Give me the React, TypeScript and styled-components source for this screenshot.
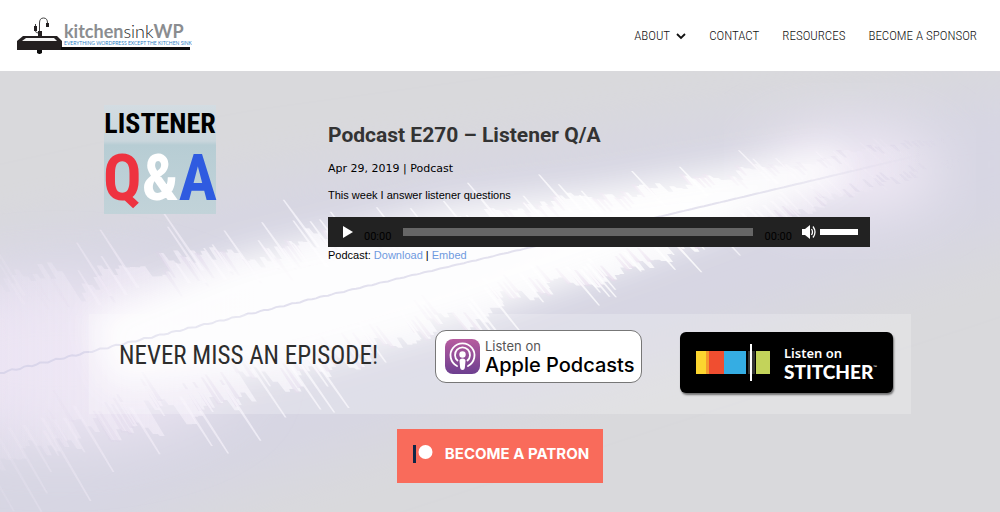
import React from "react";
import styled, { createGlobalStyle } from "styled-components";

const display = `Roboto, "Liberation Sans", sans-serif`;
const narrow = `"Roboto Condensed", Roboto, "Liberation Sans", sans-serif`;
const body = `"Liberation Sans", Arial, sans-serif`;

const GlobalStyle = createGlobalStyle`
  * { box-sizing: border-box; }
  body { margin: 0; background: #d9dadd; color: #000; font: 11px/16px ${body}; }
  h1, h2, p { margin: 0; }
  a { text-decoration: none; }
  button { padding: 0; border: 0; background: none; cursor: pointer; }
`;

const Page = styled.div`
  display: flex;
  flex-direction: column;
  min-height: 100vh;
`;

const Header = styled.header`
  display: flex;
  align-items: center;
  justify-content: space-between;
  padding: 14px 23px 13px 16px;
  background: #fff;
`;

const HomeLink = styled.a`
  display: block;
  svg { display: block; }
`;

const Nav = styled.nav`
  display: flex;
  gap: 23px;
`;

const NavLink = styled.a`
  display: flex;
  align-items: center;
  gap: 6px;
  color: #111;
  font: 300 13px/22px ${narrow};
`;

const Hero = styled.main`
  position: relative;
  flex: 1;
  padding: 34px 24px 28px;
  overflow: hidden;
`;

const Backdrop = styled.svg`
  position: absolute;
  inset: 0;
  width: 100%;
  height: 100%;
`;

const Content = styled.div`
  position: relative;
  display: flex;
  flex-direction: column;
  align-items: center;
  max-width: 822px;
  margin: 0 auto;
`;

const Episode = styled.article`
  display: flex;
  align-items: flex-start;
  gap: 112px;
  width: 100%;
  padding: 0 41px 51px 15px;
`;

const Cover = styled.div`
  display: flex;
  flex-direction: column;
  align-items: center;
  flex: none;
  width: 112px;
  background: linear-gradient(#d3dce2 0, #c9d6dc 36px, #b7cdd4 40px, #c2d3d9 100%);
  font-family: ${narrow};
  font-weight: 700;
  white-space: nowrap;
`;

const CoverTop = styled.span`
  font-size: 28px;
  line-height: 38px;
`;

const CoverBottom = styled.span`
  font-size: 64px;
  line-height: 71px;
`;

const Tint = styled.span<{ $color: string }>`
  color: ${(p) => p.$color};
`;

const Details = styled.div`
  flex: 1;
  min-width: 0;
  padding-top: 15px;
`;

const Title = styled.h1`
  margin-bottom: 11px;
  color: #333;
  font: 700 21px/30px ${display};
`;

const Meta = styled.p`
  margin-bottom: 10px;
  font: 11px/16px "DejaVu Sans", Verdana, sans-serif;
`;

const Summary = styled.p`
  margin-bottom: 14px;
`;

const Player = styled.div`
  display: flex;
  align-items: center;
  height: 30px;
  padding: 0 12px 0 14px;
  background: #222;
  svg { display: block; }
`;

const Time = styled.span`
  padding: 10px 10px 0;
  color: #000;
  font: 11px/16px ${display};
`;

const Range = styled.input<{ $color: string; $thick: string }>`
  appearance: none;
  min-width: 0;
  height: ${(p) => p.$thick};
  margin: 0;
  background: ${(p) => p.$color};
  &::-webkit-slider-thumb { appearance: none; width: 0; height: 0; }
`;

const Seek = styled(Range)`
  flex: 1;
  margin: 0 2px;
`;

const Volume = styled(Range)`
  width: 38px;
  margin-left: 4px;
`;

const TextLink = styled.a`
  color: #6f9ade;
`;

const Subscribe = styled.section`
  display: flex;
  align-items: flex-start;
  width: 100%;
  min-height: 100px;
  padding: 16px 18px 16px 30px;
  margin-bottom: 15px;
  background: rgba(255, 255, 255, 0.22);
`;

const Slogan = styled.h2`
  flex: 1;
  padding-top: 10px;
  color: #2d2d2d;
  font: 400 25px/32px ${narrow};
`;

const AppleBadge = styled.a`
  display: flex;
  align-items: center;
  gap: 5px;
  width: 207px;
  height: 53px;
  margin-right: 38px;
  padding-left: 9px;
  border: 1px solid #777;
  border-radius: 11px;
  background: #fff;
  color: #000;
`;

const StitcherBadge = styled.a`
  display: flex;
  align-items: center;
  gap: 14px;
  width: 213px;
  height: 61px;
  margin-top: 2px;
  padding-left: 15px;
  border-radius: 6px;
  background: #000;
  box-shadow: 1px 2px 2px rgba(0, 0, 0, 0.5);
  color: #fff;
`;

const BadgeText = styled.span`
  display: flex;
  flex-direction: column;
  white-space: nowrap;
`;

const AppleSmall = styled.span`
  color: #555;
  font: 400 13px/16px Inter, sans-serif;
`;

const AppleName = styled.span`
  font: 500 20px/22px Inter, sans-serif;
`;

const StitcherSmall = styled.span`
  font: 600 13px/18px "Noto Sans", sans-serif;
`;

const StitcherName = styled.span`
  display: flex;
  align-items: flex-start;
  font: 900 19px/20px Lato, sans-serif;
`;

const Trademark = styled.span`
  font: 400 5px/10px Lato, sans-serif;
`;

const PatronLink = styled.a`
  display: flex;
  align-items: center;
  gap: 12px;
  height: 54px;
  padding: 0 14px 4px 16px;
  background: #f96b5b;
  color: #fff;
  font: 700 15px/20px Inter, sans-serif;
  white-space: nowrap;
`;

const Logo = () => (
  <svg width="176" height="44" viewBox="0 0 176 44" role="img" aria-label="kitchensinkWP">
    <path d="M23.500 18V9q0-5 4-5t4 5v3" fill="none" stroke="#444" strokeWidth="1" />
    <path d="M30 9h3v4h-3z" fill="#231f20" />
    <path d="M19.500 10v7q0 2 3 2" fill="none" stroke="#444" strokeWidth="1" />
    <path d="M22 17h4v5h-4zM18 12h3v5h-3z" fill="#231f20" />
    <path d="M7 22h34l5 5v9H1v-9z" fill="#231f20" />
    <path d="M10 24h28l3 3H6z" fill="#f4f4f4" />
    <path d="M45 33h129v3H45zM21 36h5v3l-2 1h-1l-2-1z" fill="#0c0c0c" />
    <text x="48" y="24" fontFamily="Lato, sans-serif" fontSize="18">
      <tspan fontWeight="700" fill="#8b8d90">kitchen</tspan>
      <tspan fontWeight="300" fill="#222">sink</tspan>
      <tspan fontWeight="700" fill="#8b8d90">WP</tspan>
    </text>
    <text x="48" y="31" fontFamily="Lato, sans-serif" fontSize="5" fontWeight="400" fill="#2f7fc4">
      EVERYTHING WORDPRESS EXCEPT THE KITCHEN SINK
    </text>
  </svg>
);

/* Repeatable pseudo-random numbers keep the wave form the same on each render. */
const noise = (i: number) => {
  const v = Math.sin(i * 127.1 + 3.7) * 43758.5453;
  return v - Math.floor(v);
};

const axisY = (x: number) => 302 - 0.237 * x;

const wave = (() => {
  const upper: string[] = [];
  const lower: string[] = [];
  let streaks = "";
  let shadows = "";
  for (let i = 0; i < 230; i++) {
    const x = -130 + i * 4.8;
    const size = Math.max(0.12, 1 - Math.max(0, x) / 1150);
    const slant = 0.5 + 0.24 * Math.min(1, Math.max(0, x / 900));
    const drop = Math.sqrt(1 - slant * slant);
    const group = Math.floor(i / 5);
    const up = (58 + 34 * noise(group + 11) + 24 * noise(i)) * size;
    const low = (66 + 34 * noise(group + 77) + 24 * noise(i + 500)) * size;
    const y = axisY(x);
    const at = (px: number, len: number) => `${(px + len * slant).toFixed(1)},${(y + len * drop).toFixed(1)}`;
    upper.push(at(x, -up), at(x + 4.8, -up));
    lower.push(at(x, low), at(x + 4.8, low));
    /* A tapered spike: wide where it leaves the body, narrow at its tip. */
    const spike = (from: number, to: number, w: number) =>
      `M${at(x - w / 2, to)}L${at(x - w, from)}L${at(x + w, from)}L${at(x + w / 2, to)}Z`;
    if (noise(i + 90) > 0.7) streaks += spike(-up + 24, -up - 62 * noise(i + 30) * size, 1.8);
    if (noise(i + 160) > 0.7) streaks += spike(low - 24, low + 78 * noise(i + 70) * size, 1.8);
    if (noise(i + 210) > 0.62) shadows += spike(-up - 2, -up + 36 * size, 2.4);
    if (noise(i + 260) > 0.62) shadows += spike(low + 2, low - 36 * size, 2.4);
  }
  return { shape: `M${upper.join("L")}L${lower.reverse().join("L")}Z`, streaks, shadows };
})();

const axis = Array.from({ length: 240 }, (_, i) => {
  const x = i * 4;
  const ripple = Math.sin(i * 1.7) * Math.max(0, 1 - x / 600);
  return `${x},${(axisY(x) + ripple).toFixed(1)}`;
}).join(" ");

const WaveBackdrop = () => (
  <Backdrop viewBox="0 0 1000 441" preserveAspectRatio="none" aria-hidden="true">
    <defs>
      <linearGradient id="fade" gradientUnits="userSpaceOnUse" x1="0" x2="1000" y1="0" y2="0">
        <stop offset="0" stopColor="#f0e9f6" stopOpacity="0.15" />
        <stop offset="0.12" stopColor="#f4eef9" stopOpacity="0.55" />
        <stop offset="0.3" stopColor="#fbf9ff" stopOpacity="0.7" />
        <stop offset="0.7" stopColor="#fff" stopOpacity="0.8" />
        <stop offset="0.82" stopColor="#f6f0fa" stopOpacity="0.4" />
        <stop offset="0.92" stopColor="#eee8f4" stopOpacity="0" />
      </linearGradient>
      <linearGradient id="shade" gradientUnits="userSpaceOnUse" x1="0" x2="1000" y1="0" y2="0">
        <stop offset="0.02" stopColor="#ddd4e8" stopOpacity="0" />
        <stop offset="0.2" stopColor="#ddd4e8" stopOpacity="0.6" />
        <stop offset="0.7" stopColor="#e1d0e6" stopOpacity="0.7" />
        <stop offset="0.9" stopColor="#d5d0e4" stopOpacity="0.3" />
        <stop offset="0.96" stopColor="#d5d0e4" stopOpacity="0" />
      </linearGradient>
      <linearGradient id="line" gradientUnits="userSpaceOnUse" x1="0" x2="1000" y1="0" y2="0">
        <stop offset="0" stopColor="#cdcbe4" />
        <stop offset="0.75" stopColor="#d4d1e4" />
        <stop offset="0.93" stopColor="#d4d1e4" stopOpacity="0" />
      </linearGradient>
      <filter id="soft" x="-20%" y="-60%" width="140%" height="220%">
        <feGaussianBlur stdDeviation="30" />
      </filter>
      <filter id="glow" x="-20%" y="-60%" width="140%" height="220%">
        <feGaussianBlur stdDeviation="16" />
      </filter>
      <filter id="edge">
        <feGaussianBlur stdDeviation="0.5" />
      </filter>
    </defs>
    <rect width="1000" height="441" fill="#d9d9dc" />
    <path d="M-60 180L260 110L700 50L1060 10V150L600 300L200 430L60 500H-60Z" fill="#d7d6e3" filter="url(#soft)" />
    <ellipse cx="60" cy="290" rx="180" ry="80" fill="#ebe4f3" filter="url(#soft)" />
    <ellipse cx="850" cy="100" rx="90" ry="40" fill="#f1eaf6" filter="url(#soft)" />
    <g filter="url(#edge)">
      <path d={wave.shape} fill="url(#fade)" />
      <path d={wave.shadows} fill="url(#shade)" />
      <path d={wave.streaks} fill="url(#fade)" />
    </g>
    <path d="M90 245L240 185L450 135L600 118L830 80L850 105L640 188L460 250L300 295L110 315Z" fill="#fff" opacity="0.9" filter="url(#glow)" />
    <polyline points={axis} fill="none" stroke="url(#line)" strokeWidth="2" opacity="0.6" />
  </Backdrop>
);

const PodcastIcon = () => (
  <svg width="35" height="35" viewBox="0 0 35 35" aria-hidden="true">
    <defs>
      <linearGradient id="purple" x1="0" x2="0" y1="0" y2="1">
        <stop offset="0" stopColor="#b75c9f" />
        <stop offset="1" stopColor="#6d3f90" />
      </linearGradient>
    </defs>
    <rect width="35" height="35" rx="8" fill="url(#purple)" />
    <g fill="none" stroke="#fff" strokeWidth="1.800" strokeLinecap="round">
      <path d="M12 27a12 12 0 1 1 11 0" />
      <path d="M12.500 21.500a7.500 7.500 0 1 1 10 0" />
    </g>
    <circle cx="17.500" cy="15.500" r="3.200" fill="#fff" />
    <path d="M14.500 22q0-2.500 3-2.500t3 2.500l-.7 7q-.3 2-2.300 2t-2.300-2z" fill="#fff" />
  </svg>
);

const StitcherIcon = () => (
  <svg width="75" height="38" viewBox="0 0 75 38" aria-hidden="true">
    <path d="M1 7h10v23H1z" fill="#fcd52f" />
    <path d="M11 7h3v23h-3z" fill="#f59a2c" />
    <path d="M14 7h15v23H14z" fill="#f04e30" />
    <path d="M29 7h22v23H29z" fill="#35ade3" />
    <path d="M53 7h7v23h-7z" fill="#333" />
    <path d="M61 7h14v23H61z" fill="#c3d35a" />
    <path d="M55 0h2v37h-2z" fill="#fff" />
  </svg>
);

export default function App() {
  return (
    <Page>
      <GlobalStyle />
      <Header>
        <HomeLink href="#home"><Logo /></HomeLink>
        <Nav>
          <NavLink href="#about">
            ABOUT
            <svg width="10" height="7" viewBox="0 0 10 7" aria-hidden="true">
              <path d="M1 1l4 4 4-4" fill="none" stroke="#111" strokeWidth="1.800" />
            </svg>
          </NavLink>
          <NavLink href="#contact">CONTACT</NavLink>
          <NavLink href="#resources">RESOURCES</NavLink>
          <NavLink href="#sponsor">BECOME A SPONSOR</NavLink>
        </Nav>
      </Header>
      <Hero>
        <WaveBackdrop />
        <Content>
          <Episode>
            <Cover>
              <CoverTop>LISTENER</CoverTop>
              <CoverBottom>
                <Tint $color="#ee3340">Q</Tint>
                <Tint $color="#fff">&amp;</Tint>
                <Tint $color="#2f5be0">A</Tint>
              </CoverBottom>
            </Cover>
            <Details>
              <Title>Podcast E270 – Listener Q/A</Title>
              <Meta>Apr 29, 2019 | Podcast</Meta>
              <Summary>This week I answer listener questions</Summary>
              <Player>
                <button type="button" aria-label="Play">
                  <svg width="12" height="14" viewBox="0 0 12 14"><path d="M1 1l10 6-10 6z" fill="#fff" /></svg>
                </button>
                <Time>00:00</Time>
                <Seek type="range" aria-label="Seek" defaultValue={0} $color="#666" $thick="8px" />
                <Time>00:00</Time>
                <button type="button" aria-label="Mute">
                  <svg width="14" height="14" viewBox="0 0 14 14">
                    <path d="M0 4h3l5-4v14l-5-4H0z" fill="#fff" />
                    <path d="M9.500 4q2 3 0 6M11 1.500q4 5.500 0 11" fill="none" stroke="#fff" strokeWidth="1.300" />
                  </svg>
                </button>
                <Volume type="range" aria-label="Volume" defaultValue={100} $color="#fff" $thick="6px" />
              </Player>
              <p>
                Podcast: <TextLink href="#download">Download</TextLink> | <TextLink href="#embed">Embed</TextLink>
              </p>
            </Details>
          </Episode>
          <Subscribe>
            <Slogan>NEVER MISS AN EPISODE!</Slogan>
            <AppleBadge href="#apple">
              <PodcastIcon />
              <BadgeText>
                <AppleSmall>Listen on</AppleSmall>
                <AppleName>Apple Podcasts</AppleName>
              </BadgeText>
            </AppleBadge>
            <StitcherBadge href="#stitcher">
              <StitcherIcon />
              <BadgeText>
                <StitcherSmall>Listen on</StitcherSmall>
                <StitcherName>STITCHER<Trademark>™</Trademark></StitcherName>
              </BadgeText>
            </StitcherBadge>
          </Subscribe>
          <PatronLink href="#patron">
            <svg width="20" height="20" viewBox="0 0 20 20" aria-hidden="true">
              <path d="M0 1h3v18H0z" fill="#102647" />
              <circle cx="12.500" cy="8" r="7" fill="#fff" />
            </svg>
            BECOME A PATRON
          </PatronLink>
        </Content>
      </Hero>
    </Page>
  );
}
